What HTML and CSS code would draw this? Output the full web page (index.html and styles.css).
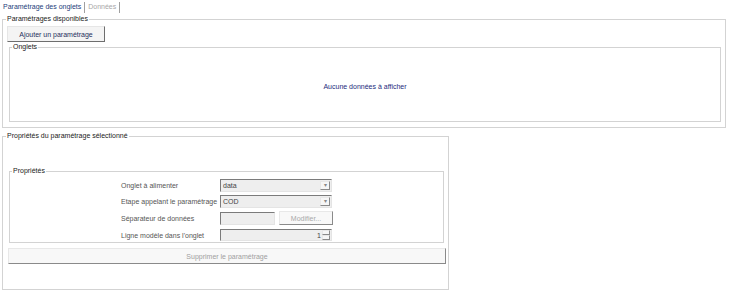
FILE: index.html
```html
<!DOCTYPE html>
<html lang="fr">
<head>
   <meta charset="UTF-8">
   <title>Paramétrage des onglets</title>
   <link rel="stylesheet" href="styles.css">
</head>
<body>
<div class="tabs">
   <span class="tab tab-active">Paramétrage des onglets</span>
   <span class="tab-sep"></span>
   <span class="tab tab-disabled">Données</span>
   <span class="tab-sep"></span>
</div>

<fieldset class="group group-available">
   <legend>Paramétrages disponibles</legend>
   <button class="btn btn-add">Ajouter un paramétrage</button>
   <fieldset class="group group-tabs">
      <legend>Onglets</legend>
      <div class="empty">Aucune données à afficher</div>
   </fieldset>
</fieldset>

<fieldset class="group group-selected">
   <legend>Propriétés du paramétrage sélectionné</legend>
   <fieldset class="group group-props">
      <legend>Propriétés</legend>
      <div class="form">
         <div class="row row-1">
            <label class="label">Onglet à alimenter</label>
            <div class="combo"><span class="value">data</span><span class="drop">&#9662;</span></div>
         </div>
         <div class="row row-2">
            <label class="label">Etape appelant le paramétrage</label>
            <div class="combo"><span class="value">COD</span><span class="drop">&#9662;</span></div>
         </div>
         <div class="row row-3">
            <label class="label">Séparateur de données</label>
            <div class="textbox"></div>
            <button class="btn btn-small" disabled>Modifier...</button>
         </div>
         <div class="row row-4">
            <label class="label">Ligne modèle dans l'onglet</label>
            <div class="numeric"><span class="value num">1</span><span class="spin"><i></i><i></i></span></div>
         </div>
      </div>
   </fieldset>
   <button class="btn btn-delete" disabled>Supprimer le paramétrage</button>
</fieldset>
</body>
</html>
```

FILE: styles.css
```css
body {
   font: 7px "Liberation Sans", Arial, sans-serif;
   color: #333;
   background: #fff;
   margin: 0;
   padding: 0;
}

.tabs {
   display: flex;
   align-items: center;
   height: 14px;
   padding-left: 3px;
}

.tab {
   line-height: 10px;
}

.tab-active {
   color: #24407a;
}

.tab-disabled {
   color: #a8a8a8;
   margin-left: 3px;
}

.tab-sep {
   width: 1px;
   height: 11px;
   background: #a0a0a0;
   margin-left: 3px;
}

/* group boxes */
.group {
   border: 1px solid #d3d3d3;
   margin: 0;
   padding: 0;
   min-width: 0;
}

.group legend {
   padding: 0 1px;
   line-height: 10px;
   color: #222;
}

.group-available {
   margin: 0 4px 0 2px;
   padding: 2px 4px 5px 4px;
}

.group-available > legend {
   margin-left: -1px;
}

.group-tabs {
   margin-left: 2px;
}

.group-tabs > legend {
   margin-left: 2px;
}

.empty {
   display: flex;
   align-items: center;
   justify-content: center;
   height: 69px;
   color: #1d2b7d;
}

.group-selected {
   width: 447px;
   box-sizing: border-box;
   margin: 3px 0 0 2px;
   padding: 25px 4px 25px 6px;
}

.group-selected > legend {
   margin-left: -3px;
}

.group-props {
   padding: 3px 0 1px 0;
}

.group-props > legend {
   margin-left: 2px;
}

/* buttons */
.btn {
   font: inherit;
   display: flex;
   align-items: center;
   justify-content: center;
   background: #f4f4f4;
   border: 1px solid;
   border-color: #e6e6e6 #6e6e6e #6e6e6e #e6e6e6;
   padding: 0;
   margin: 0;
}

.btn-add {
   width: 98px;
   height: 16px;
   color: #1f2f5c;
}

.btn-delete {
   width: 438px;
   height: 16px;
   margin: 5px 0 0 -1px;
   color: #a0a0a0;
   background: #f8f8f8;
   border-color: #e8e8e8 #8a8a8a #8a8a8a #e8e8e8;
}

.btn-small {
   width: 54px;
   height: 14px;
   margin-left: 4px;
   color: #a8a8a8;
   background: #f8f8f8;
   border-color: #e8e8e8 #8a8a8a #8a8a8a #e8e8e8;
}

/* form rows */
.form {
   display: flex;
   flex-direction: column;
   gap: 3px;
   padding-left: 111px;
}

.row {
   display: flex;
   align-items: center;
}

.row-1,
.row-2 {
   height: 13px;
}

.row-3 {
   height: 14px;
}

.row-4 {
   height: 12px;
   margin-top: 1px;
}

.label {
   width: 99px;
   color: #555;
}

.combo,
.numeric,
.textbox {
   box-sizing: border-box;
   display: flex;
   align-items: center;
   height: 100%;
   background: #eeeeee;
   border: 1px solid;
   border-color: #7b7b7b #e4e4e4 #e4e4e4 #7b7b7b;
}

.combo,
.numeric {
   width: 112px;
}

.textbox {
   width: 55px;
   height: 13px;
}

.value {
   flex: 1;
   padding-left: 2px;
   color: #444;
}

.num {
   text-align: right;
   padding-right: 1px;
}

.drop {
   box-sizing: border-box;
   width: 10px;
   height: 9px;
   margin-right: 1px;
   background: #f6f6f6;
   border: 1px solid;
   border-color: #e8e8e8 #8a8a8a #8a8a8a #e8e8e8;
   font-size: 6px;
   line-height: 7px;
   text-align: center;
   color: #888;
}

.spin {
   display: flex;
   flex-direction: column;
   width: 8px;
   height: 10px;
   margin-right: 1px;
}

.spin i {
   flex: 1;
   border: 1px solid;
   border-color: #e8e8e8 #8a8a8a #8a8a8a #e8e8e8;
   background: #f6f6f6;
}
```
